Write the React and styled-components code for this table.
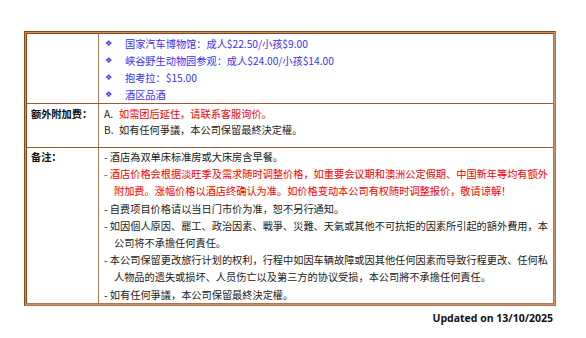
import React from "react";
import styled, { createGlobalStyle } from "styled-components";

const Global = createGlobalStyle`
  html, body { margin: 0; padding: 0; background: #fff; }
  body { font-family: "Noto Sans CJK SC", "Open Sans", sans-serif; }
`;

const Page = styled.div`
  width: 586px;
  height: 338px;
  box-sizing: border-box;
  padding: 31px 0 0 24px;
`;

const Frame = styled.div`
  width: 532px;
  box-sizing: border-box;
  border: 3px double;
  border-color: #8b4513 #ad7550 #ad7550 #8b4513;
  background: #c8916a;
`;

const Table = styled.div`
  background: #fff;
  display: flex;
  flex-direction: column;
`;

const Row = styled.div`
  display: grid;
  grid-template-columns: 72px 1fr;
  border-top: ${(p) => (p.$first ? "none" : "1px solid #9a5a35")};
`;

const Label = styled.div`
  border-right: 1px solid #ad7d5e;
  padding: ${(p) => p.$pad || "0"} 0 0 4px;
  font-size: 10.2px;
  line-height: 16px;
  font-weight: 700;
  color: #111;
`;

const Cell = styled.div`
  padding: ${(p) => p.$pad || "0 0 0 5px"};
  font-size: 10.2px;
  color: #1a1a1a;
  white-space: nowrap;
`;

const BulletList = styled.div`
  display: flex;
  flex-direction: column;
  gap: 4px;
  padding-bottom: 1px;
`;

const BulletItem = styled.div`
  display: flex;
  align-items: center;
  line-height: 13px;
  color: #3b30f5;
`;

const Diamond = styled.span`
  width: 20px;
  padding-left: 2px;
  font-family: "DejaVu Sans", sans-serif;
  font-size: 8px;
  color: #3b30f5;
`;

const Lettered = styled.div`
  display: flex;
  line-height: 16px;
`;

const Letter = styled.span`
  width: 15px;
  color: #1a1a1a;
`;

const Colored = styled.span`
  color: ${(p) => (p.$red ? "#f20000" : "#1a1a1a")};
`;

const Note = styled.div`
  line-height: 17.2px;
  color: ${(p) => (p.$red ? "#f20000" : "#1a1a1a")};
`;

const Cont = styled.div`
  padding-left: 10px;
`;

const Footer = styled.div`
  width: 529px;
  text-align: right;
  font-family: "Open Sans", "Noto Sans", sans-serif;
  font-weight: 700;
  font-size: 10.5px;
  line-height: 14px;
  margin-top: 5px;
  color: #111;
`;

const bullets = [
  "国家汽车博物馆：成人$22.50/小孩$9.00",
  "峡谷野生动物园参观：成人$24.00/小孩$14.00",
  "抱考拉：$15.00",
  "酒区品酒",
];

const notes = [
  { lines: ["酒店為双单床标准房或大床房含早餐。"] },
  {
    red: true,
    lines: [
      "酒店价格会根据淡旺季及需求随时调整价格，如重要会议期和澳洲公定假期、中国新年等均有额外",
      "附加费。涨幅价格以酒店终确认为准。如价格变动本公司有权随时调整报价，敬请谅解！",
    ],
  },
  { lines: ["自费项目价格请以当日门市价为准，恕不另行通知。"] },
  {
    lines: [
      "如因個人原因、罷工、政治因素、戰爭、災難、天氣或其他不可抗拒的因素所引起的額外費用，本",
      "公司将不承擔任何責任。",
    ],
  },
  {
    lines: [
      "本公司保留更改旅行计划的权利，行程中如因车辆故障或因其他任何因素而导致行程更改、任何私",
      "人物品的遗失或损坏、人员伤亡以及第三方的协议受损，本公司將不承擔任何責任。",
    ],
  },
  { lines: ["如有任何爭議，本公司保留最終決定權。"] },
];

export default function App() {
  return (
    <>
      <Global />
      <Page>
        <Frame>
          <Table>
            <Row $first>
              <Label />
              <Cell $pad="3px 0 1px 4px">
                <BulletList>
                  {bullets.map((b) => (
                    <BulletItem key={b}>
                      <Diamond>❖</Diamond>
                      <span>{b}</span>
                    </BulletItem>
                  ))}
                </BulletList>
              </Cell>
            </Row>
            <Row>
              <Label $pad="2px">额外附加费：</Label>
              <Cell $pad="2px 0 9px 5px">
                <Lettered>
                  <Letter>A.</Letter>
                  <Colored $red>如需团后延住，请联系客服询价。</Colored>
                </Lettered>
                <Lettered>
                  <Letter>B.</Letter>
                  <Colored>如有任何爭議，本公司保留最終決定權。</Colored>
                </Lettered>
              </Cell>
            </Row>
            <Row>
              <Label $pad="1px">备注：</Label>
              <Cell $pad="0 0 0 5px">
                {notes.map((n, i) => (
                  <Note key={i} $red={n.red}>
                    <div>- {n.lines[0]}</div>
                    {n.lines[1] && <Cont>{n.lines[1]}</Cont>}
                  </Note>
                ))}
              </Cell>
            </Row>
          </Table>
        </Frame>
        <Footer>Updated on 13/10/2025</Footer>
      </Page>
    </>
  );
}
